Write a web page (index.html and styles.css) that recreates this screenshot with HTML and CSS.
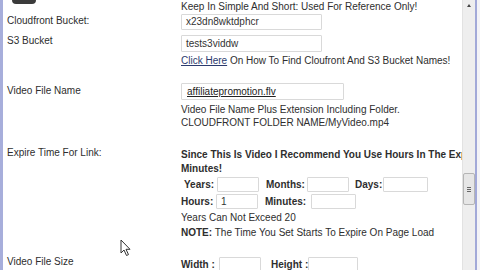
FILE: index.html
```html
<!DOCTYPE html>
<html>
<head>
<meta charset="utf-8">
<link rel="stylesheet" href="styles.css">
</head>
<body>
<div class="frame">
  <div class="edge-l"></div>
  <div class="page">
    <div class="row r1">
      <div class="label"><div class="darkbtn"></div></div>
      <div class="value">Keep In Simple And Short: Used For Reference Only!</div>
    </div>
    <div class="row r2">
      <div class="label">Cloudfront Bucket:</div>
      <div class="value"><div class="field w140">x23dn8wktdphcr</div></div>
    </div>
    <div class="row r3">
      <div class="label">S3 Bucket</div>
      <div class="value">
        <div class="field w140 h17">tests3viddw</div>
        <div class="line click"><span class="link">Click Here</span> On How To Find Cloufront And S3 Bucket Names!</div>
      </div>
    </div>
    <div class="row r4">
      <div class="label">Video File Name</div>
      <div class="value">
        <div class="field w163 h17 pad5"><span class="ul">affiliatepromotion.flv</span></div>
        <div class="desc">Video File Name Plus Extension Including Folder.<br>CLOUDFRONT FOLDER NAME/MyVideo.mp4</div>
      </div>
    </div>
    <div class="row r5">
      <div class="label">Expire Time For Link:</div>
      <div class="value clip">
        <div class="bold nowrap first">Since This Is Video I Recommend You Use Hours In The Expire Time For Link</div>
        <div class="bold">Minutes!</div>
        <div class="inrow">
          <span class="bold lbl years">Years:</span><span class="field sm w42"></span>
          <span class="bold lbl months">Months:</span><span class="field sm w42"></span>
          <span class="bold lbl days">Days:</span><span class="field sm w45"></span>
        </div>
        <div class="inrow">
          <span class="bold lbl hours">Hours:</span><span class="field sm w42">1</span>
          <span class="bold lbl mins">Minutes:</span><span class="field sm w45"></span>
        </div>
        <div class="note">Years Can Not Exceed 20</div>
        <div class="note"><b>NOTE:</b> The Time You Set Starts To Expire On Page Load</div>
      </div>
    </div>
    <div class="row r6">
      <div class="label">Video File Size</div>
      <div class="value">
        <div class="inrow">
          <span class="bold lbl width">Width :</span><span class="field sm w42 h17"></span>
          <span class="bold lbl height">Height :</span><span class="field sm w50 h17"></span>
        </div>
      </div>
    </div>
    <svg class="cursor" width="12" height="18" viewBox="0 0 12 18">
      <path d="M1 1 L1 14 L4 11 L6.5 16.5 L8.5 15.6 L6 10.3 L10 10.3 Z" fill="#fff" stroke="#333" stroke-width="1" stroke-linejoin="round"/>
    </svg>
  </div>
  <div class="scroll">
    <div class="arrow"></div>
    <div class="track-top"></div>
    <div class="thumb"><span></span><span></span><span></span></div>
    <div class="track-bot"></div>
  </div>
  <div class="edge-r"></div>
</div>
</body>
</html>
```
FILE: styles.css
```css
* { box-sizing: border-box; }
html, body { margin: 0; padding: 0; background: #fff; }
body {
  width: 480px; height: 270px; overflow: hidden;
  font-family: "Liberation Sans", Arial, sans-serif;
  font-size: 10px; color: #2e2e2e;
}
.frame { display: flex; width: 480px; height: 270px; }
.edge-l { width: 3px; background: #a7aedb; flex: none; }
.page {
  position: relative; flex: 1; overflow: hidden;
  padding-left: 4px; background: #fff;
}
.row { display: grid; grid-template-columns: 174px 1fr; }
.label { line-height: 14px; white-space: nowrap; }
.value { line-height: 14px; white-space: nowrap; min-width: 0; }
.clip { overflow: hidden; }
.darkbtn {
  width: 24px; height: 4px; margin-left: 5px;
  background: #3b3b3b; border-radius: 0 0 4px 4px;
}
.r1 { height: 14px; }
.r2 { height: 20px; }
.r2 .field { height: 16px; }
.field {
  display: block; border: 1px solid #d9d9d9; background: #fff;
  line-height: 14px; padding-left: 4px; color: #333;
  border-radius: 1px;
}
.field.sm { display: inline-block; height: 15px; vertical-align: middle; }
.h17 { height: 17px; line-height: 15px; }
.pad5 { padding-left: 5px; }
.w140 { width: 141px; }
.w163 { width: 163px; }
.w42 { width: 42px; }
.w45 { width: 45px; }
.w50 { width: 50px; }
.r3 { height: 49px; }
.r3 .field { margin-top: 1px; }
.click { margin-top: 2px; }
.link { color: #2c3b6e; text-decoration: underline; }
.r4 { height: 63px; }
.r4 .label { padding-top: 1px; }
.ul { text-decoration: underline; color: #222; }
.desc { margin-top: 3px; line-height: 13px; }
.r5 { height: 109px; }
.bold { font-weight: bold; }
.first { padding-top: 2px; }
.inrow { height: 17px; display: flex; align-items: center; }
.lbl { display: inline-block; }
.years { margin-left: 3px; width: 33px; }
.months { margin-left: 7px; width: 41px; }
.days { margin-left: 6px; width: 28px; }
.hours { width: 35px; }
.mins { margin-left: 7px; width: 46px; }
.note { line-height: 15px; }
.r6 { height: 20px; }
.r6 .inrow { margin-top: 1px; }
.width { width: 38px; }
.height { margin-left: 10px; width: 37px; }
.cursor { position: absolute; left: 117px; top: 239px; }
.scroll {
  width: 13px; flex: none; background: #eeeeee;
  border-left: 1px solid #e2e2e2;
  display: flex; flex-direction: column; align-items: center;
}
.arrow {
  margin-top: 4px; width: 0; height: 0;
  border-left: 2.5px solid transparent; border-right: 2.5px solid transparent;
  border-bottom: 3px solid #444;
}
.track-top { height: 166px; }
.thumb {
  width: 12px; height: 32px; background: #e6e6e6;
  border: 1px solid #b5b5b5; border-radius: 2px;
  display: flex; flex-direction: column; align-items: center; justify-content: center; gap: 1px;
}
.thumb span { width: 4px; height: 1px; background: #666; }
.edge-r { width: 5px; flex: none; background: #f3f3f7; border-left: 2px solid #a2a9d8; }
```
